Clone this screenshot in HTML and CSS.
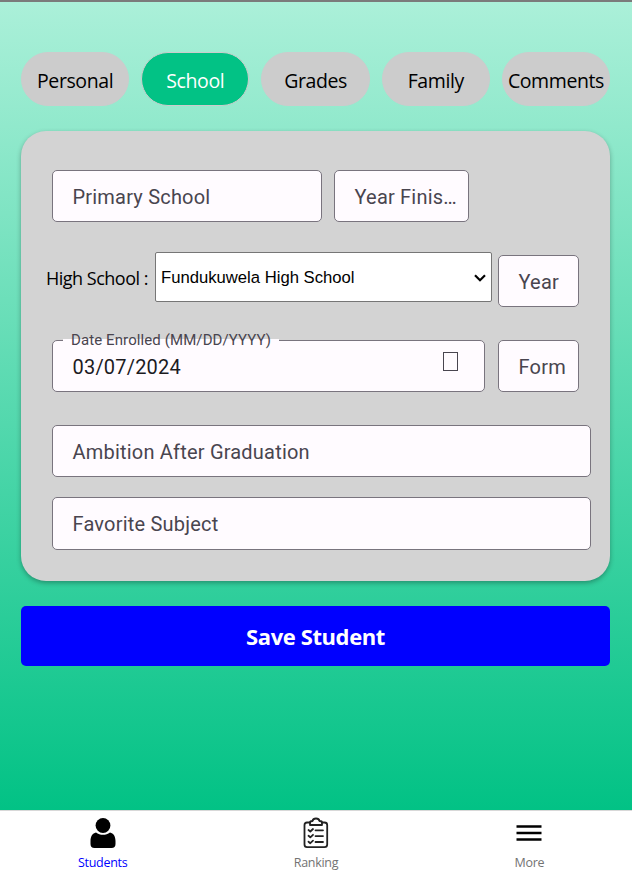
FILE: index.html
```html
<!DOCTYPE html>
<html lang="en">
<head>
<meta charset="utf-8">
<title>Student</title>
<link rel="stylesheet" href="styles.css">
</head>
<body>
<div class="screen">
  <main class="content">
    <nav class="tabs">
      <button class="tab">Personal</button>
      <button class="tab tab-active">School</button>
      <button class="tab">Grades</button>
      <button class="tab">Family</button>
      <button class="tab">Comments</button>
    </nav>
    <section class="card">
      <div class="row row-primary">
        <div class="field field-primary">Primary School</div>
        <div class="field field-finished">Year Finis…</div>
      </div>
      <div class="row row-high">
        <label class="label" for="school">High School :</label>
        <div class="select-wrap">
          <select class="select" id="school"><option>Fundukuwela High School</option></select>
          <svg class="chevron" width="12" height="8" viewBox="0 0 12 8" fill="none" stroke="#000" stroke-width="2.200"><path d="M1 1.200L6 6.200L11 1.200"/></svg>
        </div>
        <div class="field field-small field-year">Year</div>
      </div>
      <div class="row row-date">
        <div class="field field-date">
          <span class="floating">Date Enrolled (MM/DD/YYYY)</span>
          <span class="value">03/07/2024</span>
          <span class="glyph"></span>
        </div>
        <div class="field field-small">Form</div>
      </div>
      <div class="field ambition">Ambition After Graduation</div>
      <div class="field favorite">Favorite Subject</div>
    </section>
    <button class="save">Save Student</button>
  </main>
  <footer class="bar">
    <a class="item item-active">
      <svg class="icon" width="28" height="32" viewBox="0 0 28 32"><ellipse cx="14" cy="8.500" rx="7.400" ry="7.500"/><path d="M7 15.500C3.500 16.300 1.500 19.500 1.500 24V27Q1.500 31 5.500 31H22.500Q26.500 31 26.500 27V24C26.500 19.500 24.500 16.300 21 15.500C17 18.600 11 18.600 7 15.500Z"/></svg>
      <span>Students</span>
    </a>
    <a class="item">
      <svg class="icon" width="28" height="32" viewBox="0 0 28 32" fill="none" stroke="#222" stroke-width="1.800" stroke-linecap="round" stroke-linejoin="round"><path d="M8 5.500H5Q2.500 5.500 2.500 8V27.500Q2.500 30.200 5 30.200H22.500Q25.200 30.200 25.200 27.500V8Q25.200 5.500 22.500 5.500H20"/><path d="M8 8V5.500Q8 4 10.500 4Q11 1.500 14 1.500T17.500 4Q20 4 20 5.500V8Z"/><path d="M6.500 13L8.300 14.500L11 12M13.500 13.300H21M6.500 18.800L8.300 20.300L11 17.800M13.500 19.100H21M6.500 24.700L8.300 26.200L11 23.700M13.500 25H21"/></svg>
      <span>Ranking</span>
    </a>
    <a class="item">
      <svg class="icon" width="28" height="32" viewBox="0 0 28 32" stroke="#000" stroke-width="2.600"><path d="M1.500 9.500H26.500M1.500 16H26.500M1.500 22.500H26.500"/></svg>
      <span>More</span>
    </a>
  </footer>
</div>
</body>
</html>
```
FILE: styles.css
```css
* { box-sizing: border-box; }
body { margin: 0; font-family: "Open Sans", "Noto Sans", sans-serif; }
button { border: 0; padding: 0; font-family: inherit; }
.screen {
  width: 632px;
  height: 871px;
  display: flex;
  flex-direction: column;
  overflow: hidden;
  border-top: 2px solid #7b7b7b;
  background: #fff;
}
.content {
  height: 808px;
  padding: 50px 22px 0 21px;
  background: linear-gradient(#abf0d9, #02c285);
}
.tabs { display: flex; gap: 12px; }
.tab {
  flex: 1 1 0;
  min-width: 0;
  height: 54px;
  padding-top: 2px;
  border: 1px solid #ccc;
  border-radius: 27px;
  background: #ccc;
  color: #000;
  font-size: 19.5px;
  letter-spacing: -0.4px;
  white-space: nowrap;
}
.tab-active { background: #02c285; color: #fff; }
.card {
  height: 450px;
  margin-top: 25px;
  padding: 39px 19px 0 31px;
  border-radius: 25px;
  background: #d3d3d3;
  box-shadow: 0 2px 5px rgba(0, 0, 0, .3);
}
.row { display: flex; }
.field {
  height: 52px;
  padding: 0 0 0 19.5px;
  border: 1px solid #79747e;
  border-radius: 5px;
  background: #fffbff;
  color: #49454f;
  font: 20px/52px Roboto, sans-serif;
  letter-spacing: .2px;
  white-space: nowrap;
}
.row-primary { gap: 12px; }
.field-primary { width: 270px; }
.field-finished { width: 135px; }
.row-high { margin: 30px 0 0 -6px; height: 55px; }
.label { width: 109px; font-size: 18px; line-height: 53px; letter-spacing: -.5px; white-space: nowrap; }
.select-wrap { position: relative; width: 337px; height: 50px; }
.select {
  appearance: none;
  width: 100%;
  height: 100%;
  padding: 0 5px;
  border: 1px solid #767676;
  border-radius: 2px;
  background-color: #fff;
  color: #000;
  font: 16.67px "Liberation Sans", sans-serif;
}
.chevron { position: absolute; top: 22px; right: 6px; }
.field-small { width: 81px; }
.field-year { margin: 3px 0 0 6px; }
.row-date { gap: 13px; margin-top: 33px; }
.field-date { position: relative; width: 433px; color: #1c1b1f; }
.floating {
  position: absolute;
  top: -10px;
  left: 10px;
  padding: 0 8px;
  background: linear-gradient(transparent 8px, #fffbff 8px);
  color: #49454f;
  font-size: 15px;
  line-height: 18px;
  letter-spacing: .1px;
}
.value { letter-spacing: .2px; }
.glyph {
  position: absolute;
  top: 11px;
  left: 390px;
  width: 15px;
  height: 19px;
  border: 1px solid #49454f;
}
.ambition { margin-top: 33px; }
.favorite { height: 53px; margin-top: 20px; }
.save {
  display: block;
  width: 100%;
  height: 60px;
  border-radius: 5px;
  margin-top: 25px;
  background: #00f;
  color: #fff;
  font-size: 22px;
  font-weight: 700;
  letter-spacing: -.4px;
}
.bar {
  display: flex;
  height: 61px;
  margin: 0 -4px;
  border-top: 1px solid #d8d8d8;
  background: #fff;
}
.item {
  flex: 1 1 0;
  display: flex;
  flex-direction: column;
  align-items: center;
  padding-top: 6px;
  color: #737373;
  font-size: 12.5px;
  line-height: 16px;
  letter-spacing: -.3px;
}
.icon { flex-shrink: 0; }
.item span { margin-top: 6px; }
.item-active { color: #00f; }
```
